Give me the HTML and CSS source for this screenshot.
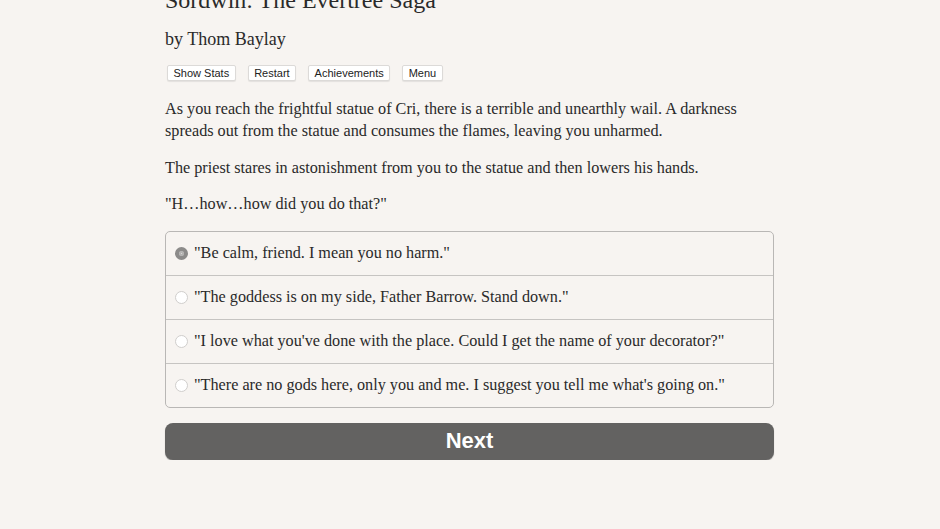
FILE: index.html
```html
<!DOCTYPE html>
<html>
<head>
<meta charset="utf-8">
<link rel="stylesheet" href="styles.css">
</head>
<body>
<div class="page">
  <h1 class="title">Sordwin: The Evertree Saga</h1>
  <h2 class="author">by Thom Baylay</h2>
  <div class="toolbar">
    <button class="tb-btn">Show Stats</button>
    <button class="tb-btn">Restart</button>
    <button class="tb-btn">Achievements</button>
    <button class="tb-btn">Menu</button>
  </div>
  <div class="story">
    <p>As you reach the frightful statue of Cri, there is a terrible and unearthly wail. A darkness spreads out from the statue and consumes the flames, leaving you unharmed.</p>
    <p>The priest stares in astonishment from you to the statue and then lowers his hands.</p>
    <p>"H…how…how did you do that?"</p>
  </div>
  <div class="choices">
    <label class="choice"><span class="radio checked"></span><span>"Be calm, friend. I mean you no harm."</span></label>
    <label class="choice"><span class="radio"></span><span>"The goddess is on my side, Father Barrow. Stand down."</span></label>
    <label class="choice"><span class="radio"></span><span>"I love what you've done with the place. Could I get the name of your decorator?"</span></label>
    <label class="choice"><span class="radio"></span><span>"There are no gods here, only you and me. I suggest you tell me what's going on."</span></label>
  </div>
  <button class="next">Next</button>
</div>
</body>
</html>
```
FILE: styles.css
```css
html, body {
  margin: 0;
  padding: 0;
  background: #f7f4f1;
}
body {
  font-family: "Liberation Serif", "Times New Roman", serif;
  color: #2a2a2a;
  overflow: hidden;
}
.page {
  width: 609px;
  margin: 0 0 0 165px;
}
.title {
  font-weight: normal;
  font-size: 24px;
  line-height: 30px;
  margin: -15px 0 0 0;
}
.author {
  font-weight: normal;
  font-size: 18px;
  line-height: 24px;
  margin: 12px 0 0 0;
}
.toolbar {
  display: flex;
  gap: 12px;
  margin: 14px 0 0 2px;
}
.tb-btn {
  font-family: "Liberation Sans", Arial, sans-serif;
  font-size: 11px;
  color: #222;
  background: #fff;
  border: 1px solid #dcdad8;
  border-radius: 2px;
  box-shadow: 0 1px 1px rgba(0,0,0,0.08);
  padding: 1px 5.5px;
  height: 16px;
  line-height: 13px;
}
.story {
  margin-top: 17px;
}
.story p {
  font-size: 16.2px;
  line-height: 22px;
  margin: 0 0 14.5px 0;
}
.choices {
  margin-top: 15.5px;
  border: 1px solid #b9b7b5;
  border-radius: 5px;
  overflow: hidden;
}
.choice {
  display: flex;
  align-items: center;
  height: 43px;
  padding-left: 9px;
  font-size: 16.2px;
  border-top: 1px solid #c6c4c2;
}
.choice:first-child {
  border-top: none;
}
.radio {
  box-sizing: border-box;
  width: 13px;
  height: 13px;
  border-radius: 50%;
  border: 1px solid #d0cecc;
  background: #fff;
  margin-right: 6px;
  flex: none;
}
.radio.checked {
  border: 4px solid #8c8b8a;
  box-shadow: inset 0 0 0 2px #b5b4b3;
  background: #e6e5e4;
}
.next {
  display: block;
  width: 100%;
  margin-top: 15px;
  height: 37px;
  border: none;
  border-radius: 8px;
  background: #636261;
  color: #fff;
  font-family: "Liberation Sans", Arial, sans-serif;
  font-weight: bold;
  font-size: 22px;
  box-shadow: 0 1px 1px rgba(0,0,0,0.3);
}
```
